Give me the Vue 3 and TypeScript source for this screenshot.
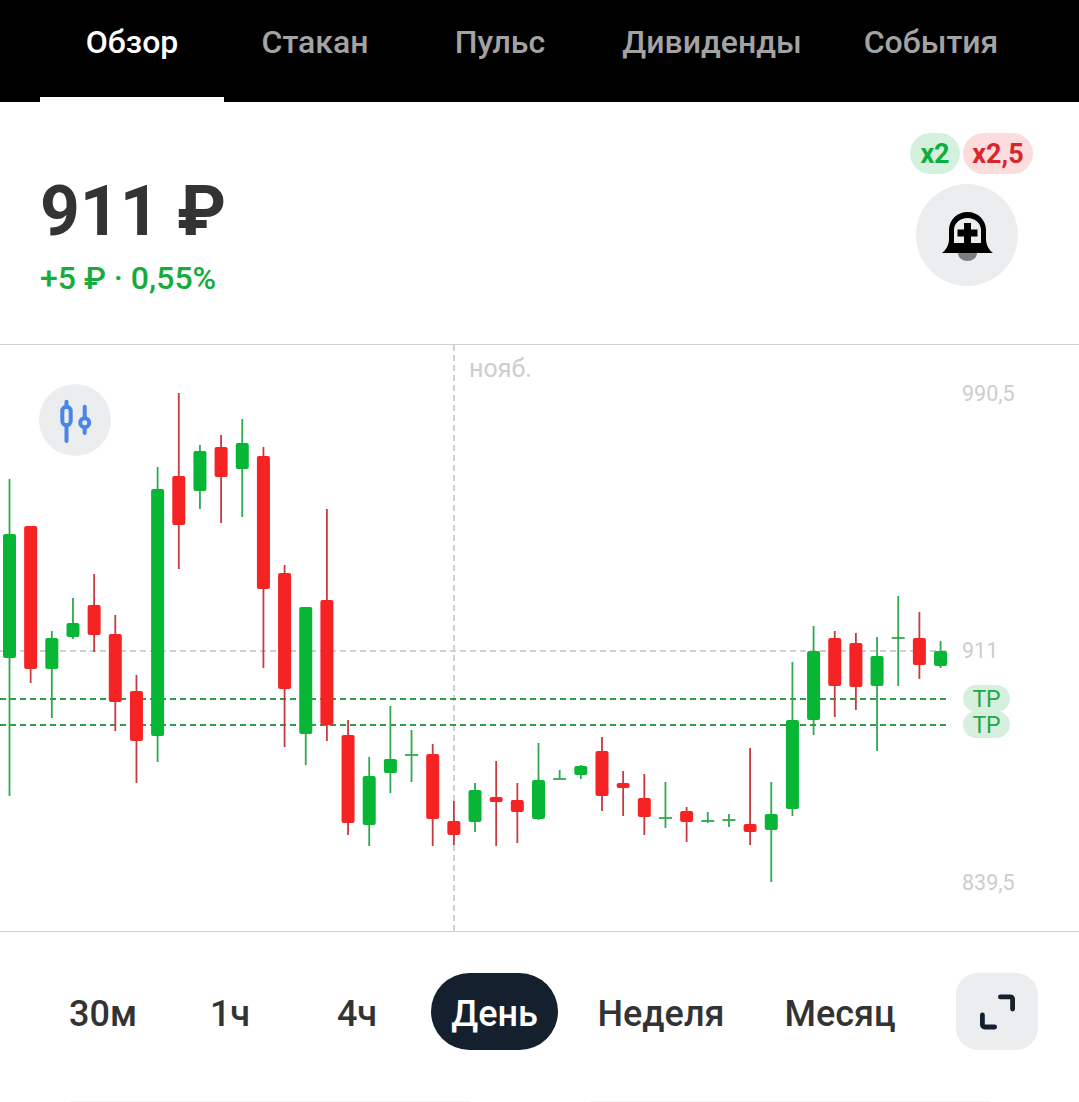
<template>
  <div class="screen">
    <nav class="tabs">
      <div v-for="(t, i) in tabs" :key="t" class="tab" :class="{ active: i === 0 }">{{ t }}</div>
    </nav>

    <header class="head">
      <div class="price-box">
        <div class="price">911 ₽</div>
        <div class="change">+5 ₽ · 0,55%</div>
      </div>
      <div class="side">
        <div class="badges">
          <span class="badge green">x2</span>
          <span class="badge red">x2,5</span>
        </div>
        <button class="bell">
          <svg width="52" height="52" viewBox="0 0 52 52">
            <path d="M17 44a9.500 8 0 0 0 19 0z" fill="#7d7d7d" />
            <path
              fill="#000"
              fill-rule="evenodd"
              d="M1 44C5 41 8 36 8 30V21C8 11 16 3 26.500 3S45 11 45 21V30C45 36 48 41 52 44ZM13 34H40V21C40 14 34 9 26.500 9S13 14 13 21Z"
            />
            <path d="M23 14h7v6.500h6.500v7H30V34h-7v-6.500h-6.500v-7H23z" fill="#000" />
          </svg>
        </button>
      </div>
    </header>

    <section class="chart">
      <svg class="plot" width="1079" height="587" viewBox="0 345 1079 587">
        <line x1="0" x2="950" y1="651" y2="651" class="grid" />
        <line x1="454" x2="454" y1="345" y2="931" class="grid" />
        <line x1="0" x2="950" y1="699" y2="699" class="tp-line" />
        <line x1="0" x2="950" y1="725" y2="725" class="tp-line" />
        <g v-for="c in candles" :key="c.x">
          <line :x1="c.x" :x2="c.x" :y1="c.wt" :y2="c.wb" :stroke="c.up ? '#2fa84f' : '#c73a40'" stroke-width="1.8" />
          <rect
            v-if="c.bb - c.bt > 2"
            :x="c.x - 6.5"
            :y="c.bt"
            width="13"
            :height="c.bb - c.bt"
            rx="2"
            :fill="c.up ? '#07b634' : '#f52323'"
          />
          <line v-else :x1="c.x - 6.5" :x2="c.x + 6.5" :y1="c.bt" :y2="c.bt" stroke="#2fa84f" stroke-width="1.8" />
        </g>
      </svg>

      <div class="month">нояб.</div>
      <button class="candle-btn">
        <svg width="34" height="46" viewBox="0 0 34 46">
          <g fill="none" stroke="#4a86e8" stroke-width="4" stroke-linecap="round">
            <path d="M8.500 4.700v5M8.500 28.300V44" />
            <rect x="4.300" y="9.700" width="8.400" height="18.600" rx="4.200" />
            <path d="M26.700 9.700V20.500M26.700 31V36" />
            <circle cx="26.700" cy="25.700" r="4.500" />
          </g>
        </svg>
      </button>

      <span class="axis a-top">990,5</span>
      <span class="axis a-mid">911</span>
      <span class="axis a-low">839,5</span>
      <span class="tp tp-1">TP</span>
      <span class="tp tp-2">TP</span>
    </section>

    <footer class="periods">
      <div v-for="p in periods" :key="p" class="period" :class="{ active: p === 'День' }">{{ p }}</div>
      <button class="expand">
        <svg width="38" height="36" viewBox="0 0 38 36">
          <g fill="none" stroke="#15202f" stroke-width="4.800" stroke-linecap="round" stroke-linejoin="round">
            <path d="M22.400 2.900h10a2.200 2.200 0 0 1 2.200 2.200V15" />
            <path d="M4.400 21v9.800a2.200 2.200 0 0 0 2.200 2.200h10" />
          </g>
        </svg>
      </button>
    </footer>
    <div class="next-cards">
      <span></span>
      <span></span>
    </div>
  </div>
</template>

<script setup lang="ts">
const tabs = ["Обзор", "Стакан", "Пульс", "Дивиденды", "События"];
const periods = ["30м", "1ч", "4ч", "День", "Неделя", "Месяц"];

// wick top, body top, body bottom, wick bottom, up
type Row = [number, number, number, number, boolean];

const rows: Row[] = [
  [479, 534, 658, 796, true],
  [526, 526, 669, 683, false],
  [631, 638, 669, 718, true],
  [598, 623, 637, 639, true],
  [574, 605, 635, 652, false],
  [615, 634, 702, 731, false],
  [675, 691, 741, 783, false],
  [467, 489, 736, 762, true],
  [393, 476, 525, 569, false],
  [445, 451, 491, 509, true],
  [435, 447, 477, 523, false],
  [419, 443, 469, 517, true],
  [447, 456, 589, 668, false],
  [565, 573, 689, 747, false],
  [607, 607, 734, 765, true],
  [509, 600, 725, 741, false],
  [720, 735, 823, 835, false],
  [757, 776, 825, 846, true],
  [706, 759, 773, 793, true],
  [730, 755, 755, 782, true],
  [744, 754, 819, 846, false],
  [801, 821, 835, 845, false],
  [783, 790, 822, 832, true],
  [761, 797, 802, 846, false],
  [783, 800, 812, 843, false],
  [743, 780, 819, 820, true],
  [770, 779, 779, 779, true],
  [765, 766, 775, 779, true],
  [737, 751, 796, 811, false],
  [771, 783, 788, 816, false],
  [774, 798, 817, 835, false],
  [782, 818, 818, 828, true],
  [807, 811, 822, 842, false],
  [812, 821, 821, 823, true],
  [814, 820, 820, 827, true],
  [748, 824, 832, 845, false],
  [782, 814, 830, 882, true],
  [662, 720, 809, 816, true],
  [626, 651, 720, 735, true],
  [631, 638, 686, 717, false],
  [633, 643, 687, 710, false],
  [637, 656, 686, 751, true],
  [596, 638, 638, 686, true],
  [612, 638, 665, 679, false],
  [641, 651, 666, 668, true],
];

const candles = rows.map(([wt, bt, bb, wb, up], i) => ({
  x: 9.5 + i * 21.16,
  wt,
  bt,
  bb,
  wb,
  up,
}));
</script>

<style>
html,
body {
  margin: 0;
  background: #fff;
}
</style>

<style scoped>
.screen {
  width: 1079px;
  height: 1102px;
  overflow: hidden;
  background: #fff;
  font-family: Roboto, "Noto Sans", sans-serif;
  color: #333;
}

button {
  border: 0;
  padding: 0;
  font: inherit;
  display: flex;
  align-items: center;
  justify-content: center;
}

.tabs {
  height: 102px;
  padding-left: 40px;
  display: grid;
  grid-template-columns: 184px 182px 188px 236px 202px;
  background: #000;
}

.tab {
  height: 97px;
  padding-bottom: 13px;
  box-sizing: border-box;
  display: flex;
  align-items: center;
  justify-content: center;
  font-size: 32px;
  font-weight: 500;
  color: #a3a3a3;
}

.tab.active {
  height: 102px;
  padding-bottom: 13px;
  color: #fff;
  border-bottom: 5px solid #fff;
}

.head {
  height: 243px;
  padding: 31px 46px 0 40px;
  box-sizing: border-box;
  display: flex;
  justify-content: space-between;
  border-bottom: 1px solid #cfcfcf;
}

.price-box {
  padding-top: 39px;
}

.price {
  font-size: 69.500px;
  line-height: 80px;
  font-weight: 700;
  color: #333;
}

.change {
  margin-top: 9px;
  font-size: 32px;
  line-height: 34px;
  font-weight: 500;
  color: #16ab3d;
}

.side {
  display: flex;
  flex-direction: column;
  align-items: flex-start;
  gap: 10px;
}

.badges {
  display: flex;
  gap: 3px;
}

.badge {
  height: 41px;
  border-radius: 21px;
  display: flex;
  align-items: center;
  justify-content: center;
  font-size: 27px;
  font-weight: 700;
}

.badge.green {
  width: 50px;
  background: #d3f1dc;
  color: #0fae3c;
}

.badge.red {
  width: 70px;
  background: #fcdcdc;
  color: #d9262c;
}

.bell {
  width: 102px;
  height: 102px;
  margin-left: 6px;
  border-radius: 50%;
  background: #ebedef;
}

.chart {
  position: relative;
  height: 586px;
  border-bottom: 1px solid #cfcfcf;
}

.plot {
  display: block;
}

.grid {
  stroke: #cfcfcf;
  stroke-width: 2;
  stroke-dasharray: 6 4;
}

.tp-line {
  stroke: #2b9e49;
  stroke-width: 2;
  stroke-dasharray: 6 4;
}

.month {
  position: absolute;
  left: 469px;
  top: 9px;
  font-size: 25px;
  color: #cdcdcd;
}

.candle-btn {
  position: absolute;
  left: 39px;
  top: 39px;
  width: 72px;
  height: 72px;
  border-radius: 50%;
  background: #ebedef;
}

.axis {
  position: absolute;
  left: 962px;
  font-size: 21.500px;
  line-height: 26px;
  color: #cdcdcd;
}

.a-top {
  top: 36px;
}

.a-mid {
  top: 293px;
}

.a-low {
  top: 525px;
}

.tp {
  position: absolute;
  left: 963px;
  width: 47px;
  height: 27px;
  border-radius: 14px;
  background: #d6f0dd;
  color: #1fa74a;
  font-size: 23px;
  line-height: 29px;
  text-align: center;
}

.tp-1 {
  top: 340px;
}

.tp-2 {
  top: 366px;
}

.periods {
  height: 169px;
  padding: 41px 0 0 40px;
  box-sizing: border-box;
  display: grid;
  grid-template-columns: 126px 128px 137px 127px 206px 152px 122px;
  grid-template-rows: 77px;
}

.period {
  padding-top: 4px;
  box-sizing: border-box;
  display: flex;
  align-items: center;
  justify-content: center;
  font-size: 36px;
  font-weight: 500;
  color: #333;
}

.period.active {
  border-radius: 39px;
  background: #15202f;
  color: #fff;
}

.period:nth-child(3) {
  margin-right: 11px;
}

.expand {
  margin-left: 40px;
  border-radius: 22px;
  background: #ebedef;
}

.next-cards {
  height: 1px;
  padding: 0 89px 0 70px;
  display: flex;
  justify-content: space-between;
}

.next-cards span {
  width: 400px;
  background: #f3f3f3;
}
</style>
